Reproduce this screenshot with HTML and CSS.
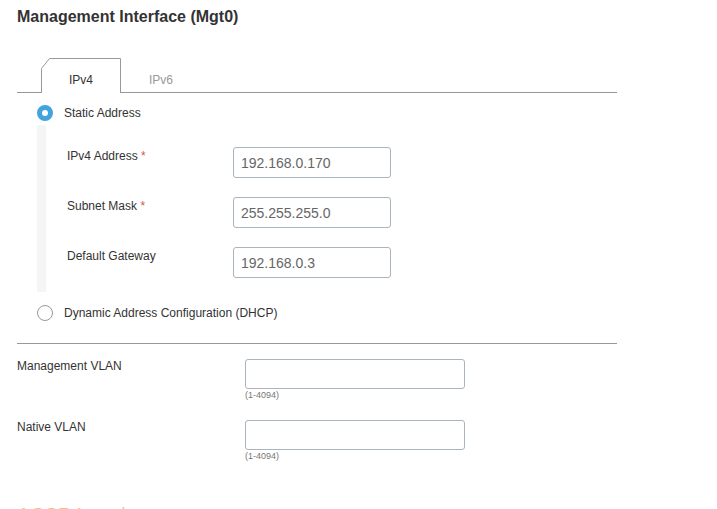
FILE: index.html
```html
<!DOCTYPE html>
<html lang="en">
  <head>
    <meta charset="UTF-8" />
    <meta name="viewport" content="width=device-width, initial-scale=1.0" />
    <title>Management Interface</title>
    <link rel="stylesheet" href="styles.css">
  </head>
  <body>
    <div class="page">
      <h2 class="title">Management Interface (Mgt0)</h2>

      <div class="tabs">
        <div class="tab active">
          <svg class="tab-edge" width="80" height="35" viewBox="0 0 80 35">
            <path d="M0.5 35 V10.5 L8.5 0.5 H79.5 V35" fill="#fff" stroke="#999" />
          </svg>
          <span>IPv4</span>
        </div>
        <div class="tab"><span>IPv6</span></div>
      </div>

      <div class="ip-mode">
        <div class="radio-row">
          <span class="radio checked"></span>
          <span class="radio-label">Static Address</span>
        </div>

        <div class="static-block">
          <div class="bar"></div>
          <div class="fields">
            <div class="field">
              <label for="ipv4Address">IPv4 Address <span class="req">*</span></label>
              <input type="text" id="ipv4Address" value="192.168.0.170" />
            </div>
            <div class="field">
              <label for="subnetMask">Subnet Mask <span class="req">*</span></label>
              <input type="text" id="subnetMask" value="255.255.255.0" />
            </div>
            <div class="field">
              <label for="defaultGateway">Default Gateway</label>
              <input type="text" id="defaultGateway" value="192.168.0.3" />
            </div>
          </div>
        </div>

        <div class="radio-row dhcp">
          <span class="radio"></span>
          <span class="radio-label">Dynamic Address Configuration (DHCP)</span>
        </div>
      </div>

      <div class="divider"></div>

      <div class="vlan">
        <div class="vlan-row">
          <label for="mgmtVlan">Management VLAN</label>
          <div class="vlan-input">
            <input type="text" id="mgmtVlan" />
            <div class="hint">(1-4094)</div>
          </div>
        </div>
        <div class="vlan-row">
          <label for="nativeVlan">Native VLAN</label>
          <div class="vlan-input">
            <input type="text" id="nativeVlan" />
            <div class="hint">(1-4094)</div>
          </div>
        </div>
      </div>

      <h3 class="section">ACSP Logging</h3>
    </div>
  </body>
</html>
```

FILE: styles.css
```css
* {
  margin: 0;
  padding: 0;
  box-sizing: border-box;
}
body {
  font-family: "Liberation Sans", Arial, sans-serif;
  color: #333;
  background: #fff;
}

.page {
  padding-left: 17px;
  padding-top: 8px;
}

.title {
  font-size: 16px;
  line-height: 18px;
  font-weight: bold;
  color: #333;
}

/* tabs */
.tabs {
  display: flex;
  width: 600px;
  height: 35px;
  margin-top: 32px;
  padding-left: 24px;
  border-bottom: 1px solid #999;
}

.tab {
  position: relative;
  width: 80px;
  height: 34px;
  padding-top: 14px;
  font-size: 12px;
  line-height: 16px;
  text-align: center;
  color: #999;
}

.tab.active {
  height: 35px;
  color: #333;
}

.tab-edge {
  position: absolute;
  left: 0;
  top: 0;
}

.tab span {
  position: relative;
}

/* static / dhcp */
.ip-mode {
  margin-left: 20px;
}

.radio-row {
  display: flex;
  align-items: center;
  gap: 11px;
  margin-top: 12px;
}

.radio {
  width: 16px;
  height: 16px;
  border-radius: 50%;
  border: 1px solid #999;
  background: #fff;
}

.radio.checked {
  border: 5px solid #43a3dd;
}

.radio-label {
  font-size: 12px;
  line-height: 16px;
}

.static-block {
  display: flex;
  margin-top: 4px;
}

.bar {
  width: 9px;
  background: #f5f5f5;
}

.fields {
  display: flex;
  flex-direction: column;
  gap: 19px;
  margin-left: 21px;
  padding: 22px 0 14px;
}

.field {
  display: flex;
}

.field label,
.vlan-row label {
  font-size: 12px;
  line-height: 14px;
  padding-top: 2px;
}

.field label {
  width: 166px;
}

.req {
  color: #d9534f;
}

input[type="text"] {
  font-family: "Liberation Sans", Arial, sans-serif;
  font-size: 14px;
  color: #666;
  border: 1px solid #aab4bd;
  border-radius: 3px;
  padding: 0 7px;
  outline: none;
}

.field input {
  width: 158px;
  height: 31px;
}

.radio-row.dhcp {
  margin-top: 13px;
}

.divider {
  width: 600px;
  height: 1px;
  background: #999;
  margin-top: 22px;
}

/* vlan */
.vlan {
  display: flex;
  flex-direction: column;
  gap: 19px;
  margin-top: 15px;
}

.vlan-row {
  display: flex;
}

.vlan-row label {
  width: 228px;
  padding-top: 0;
}

.vlan-input input {
  width: 220px;
  height: 30px;
}

.hint {
  font-size: 9px;
  line-height: 12px;
  color: #777;
}

.section {
  margin-top: 41px;
  font-size: 20px;
  line-height: 24px;
  font-weight: normal;
  color: #f3c27f;
}
```
